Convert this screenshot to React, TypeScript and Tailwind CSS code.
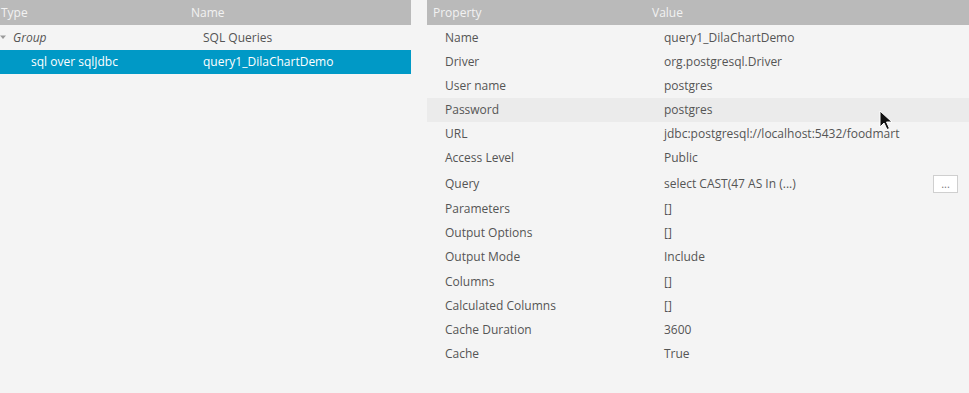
import React from "react";

const props: [string, string][] = [
  ["Name", "query1_DilaChartDemo"],
  ["Driver", "org.postgresql.Driver"],
  ["User name", "postgres"],
  ["Password", "postgres"],
  ["URL", "jdbc:postgresql://localhost:5432/foodmart"],
  ["Access Level", "Public"],
  ["Query", "select CAST(47 AS In (...)"],
  ["Parameters", "[]"],
  ["Output Options", "[]"],
  ["Output Mode", "Include"],
  ["Columns", "[]"],
  ["Calculated Columns", "[]"],
  ["Cache Duration", "3600"],
  ["Cache", "True"],
];

export default function App() {
  return (
    <div
      className="w-[969px] h-[393px] bg-[#f4f4f4] flex text-[12px] text-[#555] overflow-hidden relative"
      style={{ fontFamily: '"Open Sans", "Noto Sans", sans-serif' }}
    >
      {/* left: tree of data sources */}
      <div className="w-[411px] flex flex-col">
        <div className="h-[25px] bg-[#bababa] text-[#f2f2f2] flex items-center">
          <span className="w-[191px] pl-[1px]">Type</span>
          <span>Name</span>
        </div>
        <div className="h-[25px] flex items-center">
          <span className="w-[13px] flex justify-center">
            <svg width="7" height="5" viewBox="0 0 7 5" className="-ml-[6px]">
              <path d="M0 0.5 L6 0.5 L3 4 Z" fill="#9a9a9a" />
            </svg>
          </span>
          <span className="w-[190px] italic">Group</span>
          <span>SQL Queries</span>
        </div>
        <div className="h-[24px] bg-[#0099c6] text-white flex items-center">
          <span className="w-[203px] pl-[31px]">sql over sqlJdbc</span>
          <span>query1_DilaChartDemo</span>
        </div>
      </div>

      <div className="w-[16px]" />

      {/* right: property grid */}
      <div className="flex-1 flex flex-col">
        <div className="h-[25px] bg-[#bababa] text-[#f2f2f2] flex items-center">
          <span className="w-[225px] pl-[6px]">Property</span>
          <span>Value</span>
        </div>
        <div className="pt-[1px]">
          {props.map(([k, v]) => (
            <div
              key={k}
              className={`flex items-center ${
                k === "Query" ? "h-[27px]" : k === "Columns" ? "h-[25px]" : "h-[24px]"
              } ${k === "Password" ? "bg-[#ebebeb]" : ""}`}
            >
              <span className="w-[237px] pl-[18px]">{k}</span>
              <span className="flex-1">{v}</span>
              {k === "Query" && (
                <button className="w-[25px] h-[18px] mr-[11px] border border-[#cfcfcf] bg-white text-[#777] text-[11px] leading-[12px] flex items-end justify-center pb-[2px]">
                  ...
                </button>
              )}
            </div>
          ))}
        </div>
      </div>

      {/* mouse pointer */}
      <svg
        width="16"
        height="22"
        viewBox="0 0 16 22"
        className="absolute left-[879px] top-[110px]"
      >
        <path
          d="M1 1 L1 17 L5 13 L8 19.5 L10.5 18.5 L7.5 12 L13 12 Z"
          fill="#111"
          stroke="#fff"
          strokeWidth="1"
        />
      </svg>
    </div>
  );
}
